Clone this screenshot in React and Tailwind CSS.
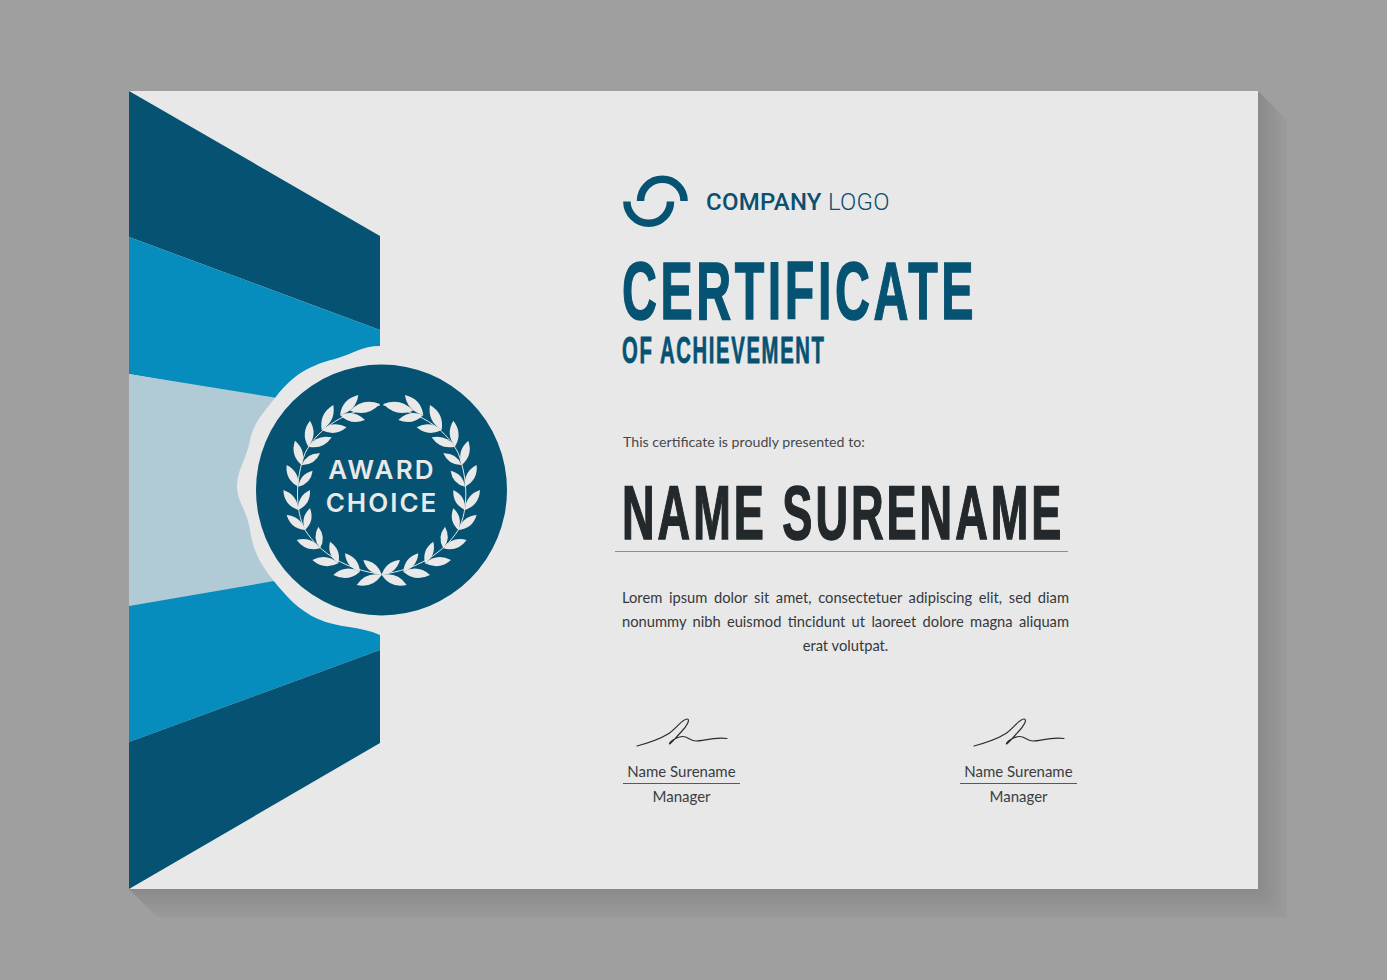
const dark = "#055272";

const leaves = [
  [455,705,380,735],[455,705,400,660],[390,695,310,705],[390,695,345,640],
  [325,670,247,660],[325,670,300,605],[270,625,200,600],[270,625,265,560],
  [225,570,170,525],[225,570,240,505],[205,510,160,450],[205,510,240,450],
  [205,440,170,375],[205,440,248,392],[215,375,195,302],[215,375,270,340],
  [235,320,240,242],[235,320,305,292],[275,270,310,195],[275,270,350,262],
  [330,225,385,165],[330,225,405,240],[360,212,450,192],
];

function leafPath([x1, y1, x2, y2]) {
  const mx = (x1 + x2) / 2, my = (y1 + y2) / 2;
  const dx = x2 - x1, dy = y2 - y1;
  const k = 0.34;
  return `M${x1} ${y1}Q${mx - dy * k} ${my + dx * k} ${x2} ${y2}Q${mx + dy * k} ${my - dx * k} ${x1} ${y1}Z`;
}

function Branch() {
  return (
    <g>
      <path d="M455 703C350 690 270 640 225 570C195 510 195 420 225 340C255 280 320 220 450 195" fill="none" stroke="#e9e9e9" strokeWidth="3" />
      {leaves.map((l, i) => <path key={i} d={leafPath(l)} fill="#e9e9e9" />)}
    </g>
  );
}

function Art() {
  return (
    <svg viewBox="129 91 380 798" className="w-[380px] h-[798px] shrink-0 block">
      <polygon points="129,91 380,236 380,330 129,237" fill={dark} />
      <polygon points="129,237 380,330 380,400 275,400 129,374" fill="#068cbd" />
      <polygon points="129,374 290,400 290,580 129,606" fill="#b0cbd6" />
      <polygon points="129,606 280,580 380,600 380,650 129,742" fill="#068cbd" />
      <polygon points="129,742 380,650 380,743 129,889" fill={dark} />
      <path
        d="M380 346C362 346 352 354 338 358C316 364 296 370 275 398C264 412 254 422 250 440C247 458 237 470 237 486C237 502 247 510 250 530C253 552 262 566 273 580C286 596 298 610 318 619C338 628 360 626 380 635L420 635L420 346Z"
        fill="#e8e8e8"
      />
      <circle cx="381.5" cy="490" r="125.5" fill={dark} />
      <g transform="translate(230 340) scale(0.3333)">
        <Branch />
        <g transform="translate(910 0) scale(-1 1)">
          <Branch />
        </g>
      </g>
      <text x="382" y="479" textAnchor="middle" fontFamily="Inter, sans-serif" fontWeight="600" fontSize="26" letterSpacing="2.2" fill="#e9e9e9">AWARD</text>
      <text x="382" y="512" textAnchor="middle" fontFamily="Inter, sans-serif" fontWeight="600" fontSize="26" letterSpacing="2" fill="#e9e9e9">CHOICE</text>
    </svg>
  );
}

function Logo() {
  return (
    <svg viewBox="622 174 68 54" className="w-[68px] h-[54px] block shrink-0">
      <path d="M640.5 201A21.8 21.8 0 0 1 684.1 201" fill="none" stroke={dark} strokeWidth="7.5" />
      <path d="M626.9 201.5A21.8 21.8 0 0 0 670.5 201.5" fill="none" stroke={dark} strokeWidth="7.5" />
    </svg>
  );
}

function Signature() {
  return (
    <svg viewBox="634 715 96 35" className="w-[96px] h-[35px] block">
      <path
        d="M637 746C648 743 660 739 668 734C676 729 682 719 687 719C691 719 686 727 682 731C677 736 671 744 669.5 744C669 742 676 737 682 736.5C688 736 690 741 696 741C704 741 712 737 727 738.5"
        fill="none" stroke="#2a2d30" strokeWidth="1.2" strokeLinecap="round"
      />
    </svg>
  );
}

function Signer() {
  return (
    <div className="w-[117px] flex flex-col items-center">
      <Signature />
      <div className="w-full text-center text-[15px] leading-[20px] mt-[11px] pb-[2px] border-b border-[#55595c] text-[#3a3d40]">Name Surename</div>
      <div className="text-[15px] leading-[20px] mt-[2px] text-[#3a3d40]">Manager</div>
    </div>
  );
}

export default function App() {
  return (
    <div className="w-[1387px] h-[980px] bg-[#9f9f9f] pt-[91px] pl-[129px] overflow-hidden font-['Lato',sans-serif]">
      <div className="relative w-[1129px] h-[798px]">
        <svg className="absolute left-0 top-0 w-[1158px] h-[827px]" viewBox="129 91 1158 827">
          <defs>
            <linearGradient id="sr" x1="0" x2="1" y1="0" y2="0">
              <stop offset="0" stopColor="#8a8a8a" />
              <stop offset="1" stopColor="#9b9b9b" />
            </linearGradient>
            <linearGradient id="sb" x1="0" x2="0" y1="0" y2="1">
              <stop offset="0" stopColor="#8a8a8a" />
              <stop offset="1" stopColor="#9b9b9b" />
            </linearGradient>
          </defs>
          <polygon points="1258,91 1287,120 1287,918 1258,889" fill="url(#sr)" />
          <polygon points="129,889 158,918 1287,918 1258,889" fill="url(#sb)" />
        </svg>
        <div className="relative flex w-full h-full bg-[#e8e8e8] overflow-hidden">
          <Art />
          <div className="flex flex-col pl-[113px] pt-[83px] text-[#35383b]">
            <div className="flex items-center gap-[16px] h-[54px]">
              <Logo />
              <div className="mt-[2px] text-[24px] leading-[30px] tracking-[0.25px] font-['Roboto',sans-serif] text-[#0c4f70] whitespace-nowrap">
                <span className="font-medium">COMPANY</span> <span className="font-light">LOGO</span>
              </div>
            </div>
            <div className="h-[72px] mt-[27px] text-[82px] leading-[72px] tracking-[6px] font-bold font-['Liberation_Sans',sans-serif] text-[#055272] [-webkit-text-stroke:1.5px_#055272] whitespace-nowrap origin-left scale-x-[0.59]">CERTIFICATE</div>
            <div className="h-[40px] mt-[4px] text-[37px] leading-[40px] tracking-[3px] font-bold font-['Liberation_Sans',sans-serif] text-[#055272] [-webkit-text-stroke:0.8px_#055272] whitespace-nowrap origin-left scale-x-[0.548]">OF ACHIEVEMENT</div>
            <div className="ml-[1px] mt-[61px] text-[14.2px] leading-[20px] text-[#45484b]">This certificate is proudly presented to:</div>
            <div className="h-[78px] mt-[22px] text-[76px] leading-[78px] tracking-[5px] font-bold font-['Liberation_Sans',sans-serif] text-[#22282b] [-webkit-text-stroke:1.5px_#22282b] whitespace-nowrap origin-left scale-x-[0.594]">NAME SURENAME</div>
            <div className="w-[453px] ml-[-7px] mt-[-1px] border-b border-[#8f8f8f]"></div>
            <p className="w-[447px] mt-[33px] text-[14.7px] leading-[24px] text-[#35383b] [text-align:justify] [text-align-last:center]">
              Lorem ipsum dolor sit amet, consectetuer adipiscing elit, sed diam nonummy nibh euismod tincidunt ut laoreet dolore magna aliquam erat volutpat.
            </p>
            <div className="w-[454px] ml-[1px] mt-[58px] flex justify-between">
              <Signer />
              <Signer />
            </div>
          </div>
        </div>
      </div>
    </div>
  );
}
